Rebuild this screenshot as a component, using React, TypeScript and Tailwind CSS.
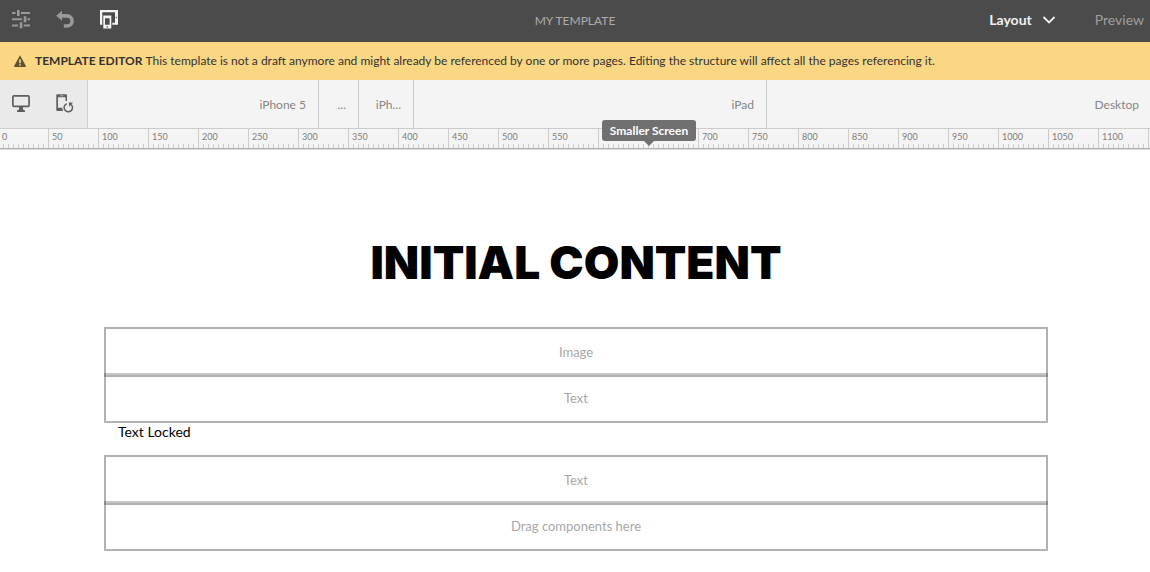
import React from 'react';

type Device = { label: string; name: string; size: string };

const devices: Device[] = [
  { label: 'iPhone 5', name: 'iPhone 5', size: 'w-[231px] shrink-0 border-r pr-3' },
  { label: '...', name: 'Small tablet', size: 'w-10 shrink-0 border-r pr-3' },
  { label: 'iPh...', name: 'iPhone 6 Plus', size: 'w-[55px] shrink-0 border-r pr-3' },
  { label: 'iPad', name: 'iPad', size: 'w-[353px] shrink-0 border-r pr-3' },
  { label: 'Desktop', name: 'Desktop', size: 'min-w-0 flex-1 pr-[11px]' },
];

const marks = Array.from({ length: 60 }, (_, i) => i * 50);

const hasLabel = (mark: number) => mark <= 1100 && mark !== 600 && mark !== 650;

function SettingsIcon() {
  return (
    <svg width="20" height="20" viewBox="0 0 20 20" fill="#999999" aria-hidden="true">
      <path d="M1 3h3.500v2H1zM10 3h9v2h-9zM6 1h2.600v6H6zM1 9.200h10v2H1zM16.500 9.200H19v2h-2.500zM12.700 7.200h2.600v6h-2.600zM1 15.500h6v2H1zM12.700 15.500H19v2h-6.300zM8.700 13.200h2.600v6H8.700z" />
    </svg>
  );
}

function UndoIcon() {
  return (
    <svg width="20" height="20" viewBox="0 0 20 20" fill="#999999" aria-hidden="true">
      <path d="M1.200 6.800 7 1.800V5h5a6.900 6.900 0 0 1 0 13.800H8.800v-3.500H12a3.300 3.300 0 0 0 0-6.600H7v3z" />
    </svg>
  );
}

function DevicesIcon() {
  return (
    <svg width="20" height="20" viewBox="0 0 20 20" aria-hidden="true">
      <path d="M1 1h18v14.800h-5.700v-2H16V3.200H3.300v12.600H1z" fill="#f5f5f5" />
      <path d="M16.800 7.800h1v1.400h-1z" fill="#4b4b4b" />
      <path d="M4.300 6.500h8v13h-8z" fill="#f5f5f5" />
      <path d="M6 9.300h4.600v6.500H6zM7.600 17.200h1.500v1.200H7.600z" fill="#4b4b4b" />
    </svg>
  );
}

function AlertIcon() {
  return (
    <svg width="12" height="12" viewBox="0 0 12 12" aria-hidden="true">
      <path d="M6 .2 12 11.200q.1.800-.7.800H.7Q-.1 12 0 11.200z" fill="#5f5132" />
      <path d="M5.200 4.200h1.600v4H5.200zM5.200 9.300h1.600v1.500H5.200z" fill="#fbd784" />
    </svg>
  );
}

function MonitorIcon() {
  return (
    <svg width="20" height="20" viewBox="0 0 20 20" aria-hidden="true">
      <rect x="1.900" y="1.900" width="16.200" height="10.400" rx="1" fill="none" stroke="#5e5e5e" strokeWidth="1.700" />
      <path d="M8 13h4v2.500l2 1V18H6v-1.500l2-1z" fill="#5e5e5e" />
    </svg>
  );
}

function RotateDeviceIcon() {
  return (
    <svg width="20" height="20" viewBox="0 0 20 20" fill="none" aria-hidden="true">
      <path d="M2.300.3h8.700a1 1 0 0 1 1 1V7h-1.500V3.300H3v10.500h4.300a6 6 0 0 0 .9 3.200H2.300a1 1 0 0 1-1-1V1.300a1 1 0 0 1 1-1z" fill="#5e5e5e" />
      <path d="M5.200 1.800h3" stroke="#c4c4c4" />
      <path d="M11.800 9.700a4.200 4.200 0 1 0 4.300.8" stroke="#5e5e5e" strokeWidth="1.500" />
      <path d="M13.800 8.500h4.200l-3.700 4.200z" fill="#5e5e5e" />
    </svg>
  );
}

function ChevronIcon() {
  return (
    <svg width="14" height="8" viewBox="0 0 14 8" fill="none" aria-hidden="true">
      <path d="m1.500 1 5.500 5.500L12.500 1" stroke="#f0f0f0" strokeWidth="1.800" />
    </svg>
  );
}

function Header() {
  return (
    <header className="grid h-[42px] grid-cols-[1fr_auto_1fr] items-center bg-[#4b4b4b]">
      <div className="flex gap-6 pb-1 pl-[11px]">
        <button type="button" aria-label="Page information"><SettingsIcon /></button>
        <button type="button" aria-label="Undo"><UndoIcon /></button>
        <button type="button" aria-label="Emulator"><DevicesIcon /></button>
      </div>
      <h1 className="text-xs text-[#adadad]">MY TEMPLATE</h1>
      <div className="flex items-center justify-end gap-[39px] pb-0.5 pr-1.5 text-sm">
        <button type="button" className="flex items-center gap-2.5 font-bold text-[#f0f0f0]">
          Layout
          <ChevronIcon />
        </button>
        <button type="button" className="text-[#9e9e9e]">Preview</button>
      </div>
    </header>
  );
}

function Ruler() {
  return (
    <div className="relative">
      <div className="flex h-5 overflow-hidden border-t border-[#cccccc] bg-[#f4f4f4]">
        <div className="-ml-0.5 flex">
          {marks.map((m) => (
            <div key={m} className="flex w-[50px] shrink-0 flex-col justify-end border-l border-[#cccccc]">
              {hasLabel(m) && <span className="pb-px pl-[3px] text-[9px] leading-3 text-[#7c7c7c]">{m}</span>}
              <span className="-ml-px h-1 bg-[repeating-linear-gradient(90deg,#cccccc_0_1px,transparent_1px_5px)]" />
            </div>
          ))}
        </div>
      </div>
      <div className="h-0.5 border-t border-[#b0b0b0] bg-[#dddddd]" />
      <div role="tooltip" className="absolute -top-2 left-[602px] flex flex-col items-center">
        <span className="w-[94px] rounded-[3px] bg-[#707070] text-center text-xs leading-[21px] font-bold text-white">Smaller Screen</span>
        <span className="border-x-5 border-t-5 border-x-transparent border-t-[#707070]" />
      </div>
    </div>
  );
}

function Placeholders({ items }: { items: [string, string] }) {
  return (
    <div className="border-2 border-[#b2b2b2] text-center text-[13px] text-[#a8a8a8]">
      <div className="h-11 leading-[46px]">{items[0]}</div>
      <div className="-mx-0.5 h-1 border-x-2 border-[#8c8c8c] bg-linear-to-b from-[#c6c6c6] from-50% to-[#b0b0b0] to-50%" />
      <div className="h-11 leading-[42px]">{items[1]}</div>
    </div>
  );
}

export default function App() {
  return (
    <div className="min-h-screen overflow-x-hidden bg-white font-['Lato',sans-serif]">
      <Header />
      <div role="alert" className="flex h-[38px] items-center bg-[#fbd784] pl-3.5 text-xs text-[#323232]">
        <AlertIcon />
        <strong className="ml-[9px]">TEMPLATE EDITOR</strong>
        <p className="ml-[3px] whitespace-nowrap">
          This template is not a draft anymore and might already be referenced by one or more pages. Editing the structure will affect all the pages referencing it.
        </p>
      </div>
      <nav aria-label="Devices" className="flex h-12 bg-[#f4f4f4]">
        <div className="flex w-22 shrink-0 items-center gap-6 border-r border-[#d0d0d0] bg-[#eaeaea] pl-[11px]">
          <button type="button" aria-label="Native size"><MonitorIcon /></button>
          <button type="button" aria-label="Rotate device"><RotateDeviceIcon /></button>
        </div>
        {devices.map((d) => (
          <button key={d.name} type="button" aria-label={d.name} className={`border-[#cccccc] pt-0.5 text-right text-xs text-[#858585] ${d.size}`}>
            {d.label}
          </button>
        ))}
      </nav>
      <Ruler />
      <main className="pt-20 pr-[102px] pl-[104px]">
        <h2 className="text-center font-['Inter',sans-serif] text-[46px] leading-[65px] font-black text-black">INITIAL CONTENT</h2>
        <div className="pt-8">
          <Placeholders items={['Image', 'Text']} />
          <p className="px-3.5 pb-3.5 text-sm leading-[18px] text-black">Text Locked</p>
          <Placeholders items={['Text', 'Drag components here']} />
        </div>
      </main>
    </div>
  );
}
